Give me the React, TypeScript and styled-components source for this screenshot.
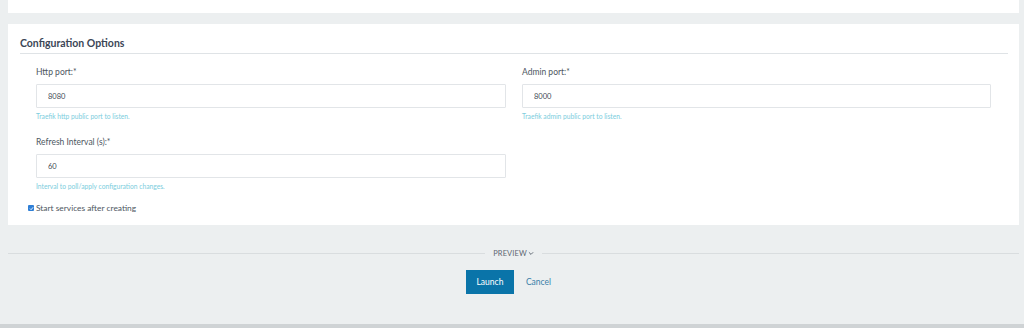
import React from "react";
import styled, { createGlobalStyle } from "styled-components";

const Global = createGlobalStyle`
  html, body { margin: 0; padding: 0; }
  body {
    background: #eceff0;
    font-family: Lato, "Open Sans", "Liberation Sans", sans-serif;
    color: #4a5461;
    height: 328px;
    overflow: hidden;
  }
`;

const Page = styled.div`
  height: 328px;
  display: flex;
  flex-direction: column;
  padding: 0 5px 0 8px;
  box-sizing: border-box;
  position: relative;
`;

const TopCard = styled.div`
  background: #fff;
  height: 13px;
  flex: none;
`;

const Card = styled.section`
  background: #fff;
  margin-top: 11px;
  padding: 11px 11px 10px 12px;
  height: 201px;
  box-sizing: border-box;
`;

const Heading = styled.h2`
  margin: 0;
  font-size: 10.5px;
  line-height: 16px;
  font-weight: 700;
  color: #3b4656;
  padding-bottom: 2px;
  border-bottom: 1px solid #dfe3e6;
`;

const Grid = styled.div`
  display: grid;
  grid-template-columns: 470px 469px;
  column-gap: 16px;
  row-gap: 14px;
  padding: 11px 0 0 16px;
`;

const Field = styled.div`
  display: flex;
  flex-direction: column;
`;

const Label = styled.label`
  font-size: 8.5px;
  line-height: 14px;
  color: #4d5661;
  margin-bottom: 5px;
`;

const Input = styled.input`
  box-sizing: border-box;
  height: 24px;
  width: 100%;
  border: 1px solid #e2e5e8;
  border-radius: 1px;
  padding: 0 11px;
  font-family: Lato, "Open Sans", sans-serif;
  font-size: 7.5px;
  color: #424a55;
  background: #fff;
  outline: none;
`;

const Help = styled.div`
  margin-top: 3px;
  font-size: 6.7px;
  line-height: 10px;
  color: #7ccddd;
`;

const CheckRow = styled.label`
  display: flex;
  align-items: center;
  gap: 2px;
  margin: 11px 0 0 8px;
  font-size: 8.4px;
  line-height: 12px;
  color: #4d5661;
`;

const Box = styled.span`
  width: 6px;
  height: 6px;
  border-radius: 1px;
  background: #2f7fd6;
  display: inline-flex;
  align-items: center;
  justify-content: center;
`;

const Footer = styled.div`
  display: flex;
  flex-direction: column;
  align-items: center;
  padding-top: 24px;
`;

const Divider = styled.div`
  width: 100%;
  display: flex;
  align-items: center;
  gap: 8px;
  height: 8px;
  &::before, &::after {
    content: "";
    flex: 1;
    height: 1px;
    background: #d9dddf;
  }
`;

const Preview = styled.span`
  font-size: 7.5px;
  letter-spacing: 0.1px;
  color: #5d6671;
  display: inline-flex;
  align-items: center;
  gap: 1px;
  text-transform: uppercase;
`;

const Actions = styled.div`
  display: flex;
  align-items: center;
  gap: 12px;
  margin-top: 13px;
`;

const Launch = styled.button`
  width: 48px;
  height: 24px;
  border: none;
  background: #0a74a9;
  color: #fff;
  font-family: Lato, "Open Sans", sans-serif;
  font-size: 8.5px;
  padding: 0;
  cursor: pointer;
`;

const Cancel = styled.a`
  font-size: 8.5px;
  color: #3a7ea8;
  text-decoration: none;
  margin-right: 10px;
`;

const BottomBar = styled.div`
  position: absolute;
  left: 0;
  right: 0;
  bottom: 0;
  height: 4px;
  background: #cfd3d5;
`;

const fields = [
  { label: "Http port:*", value: "8080", help: "Traefik http public port to listen." },
  { label: "Admin port:*", value: "8000", help: "Traefik admin public port to listen." },
  { label: "Refresh Interval (s):*", value: "60", help: "Interval to poll/apply configuration changes." },
];

export default function App() {
  return (
    <>
      <Global />
      <Page>
        <TopCard />
        <Card>
          <Heading>Configuration Options</Heading>
          <Grid>
            {fields.map((f) => (
              <Field key={f.label}>
                <Label>{f.label}</Label>
                <Input defaultValue={f.value} />
                <Help>{f.help}</Help>
              </Field>
            ))}
          </Grid>
          <CheckRow>
            <Box>
              <svg width="5" height="5" viewBox="0 0 10 10">
                <path d="M2 5.2 L4.2 7.4 L8.2 2.6" fill="none" stroke="#fff" strokeWidth="1.8" />
              </svg>
            </Box>
            Start services after creating
          </CheckRow>
        </Card>
        <Footer>
          <Divider>
            <Preview>
              Preview
              <svg width="6" height="5" viewBox="0 0 10 8">
                <path d="M1.5 2 L5 5.5 L8.5 2" fill="none" stroke="#5d6671" strokeWidth="1.6" />
              </svg>
            </Preview>
          </Divider>
          <Actions>
            <Launch>Launch</Launch>
            <Cancel href="#">Cancel</Cancel>
          </Actions>
        </Footer>
        <BottomBar />
      </Page>
    </>
  );
}
